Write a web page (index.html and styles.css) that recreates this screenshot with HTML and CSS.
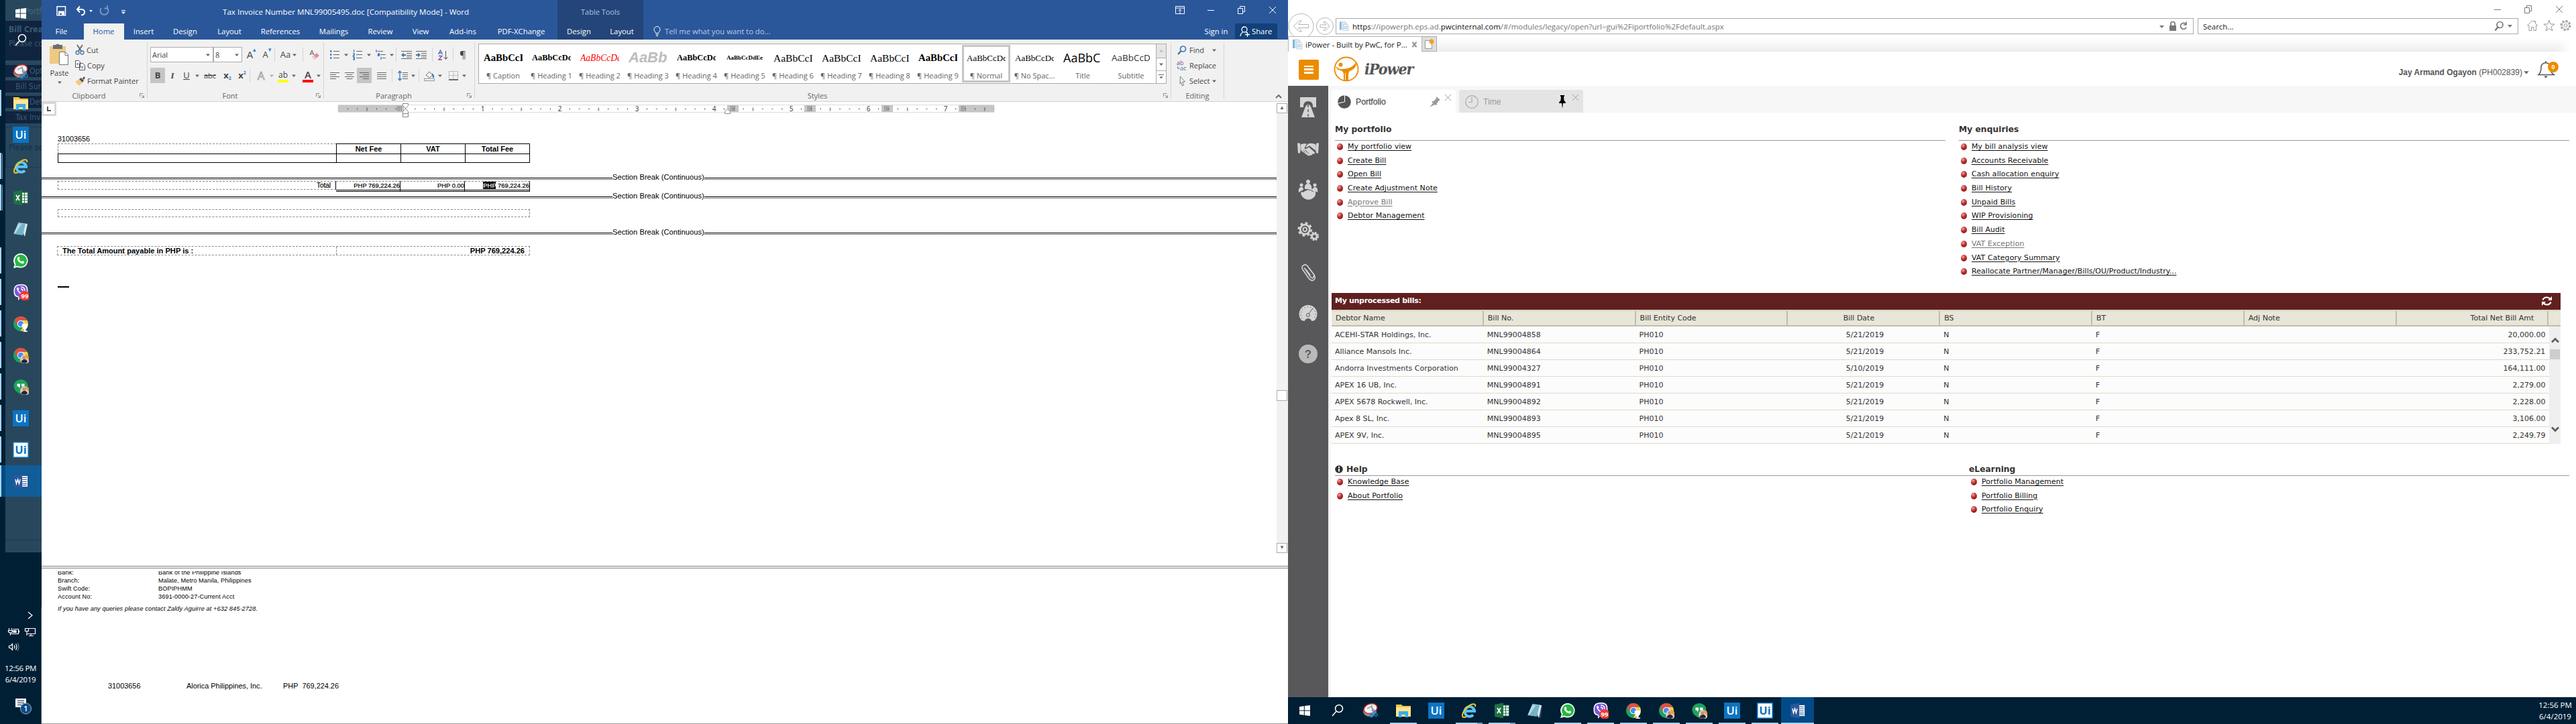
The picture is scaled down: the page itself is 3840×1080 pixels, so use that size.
FILE: index.html
```html
<!DOCTYPE html>
<html lang="en">
<head>
<meta charset="utf-8">
<title>Desktop</title>
<link rel="stylesheet" href="styles.css">
</head>
<body>
<svg class="defs" width="0" height="0" aria-hidden="true">
  <symbol id="i-start" viewBox="0 0 24 24"><path fill="#fff" d="M4 6.200l6.800-1v6.300H4zM11.800 5L20 3.900v7.600h-8.200zM4 12.500h6.800v6.300L4 17.800zM11.800 12.500H20v7.600L11.800 19z"/></symbol>
  <symbol id="i-search" viewBox="0 0 24 24"><g fill="none" stroke="#fff" stroke-width="1.500"><circle cx="14" cy="9" r="5.500"/><path d="M10 13L4 20"/></g></symbol>
  <symbol id="i-snip" viewBox="0 0 24 24"><ellipse cx="11" cy="13" rx="10" ry="8" fill="#8c8f94"/><ellipse cx="12" cy="9" rx="10" ry="7" fill="#f4f4f4" stroke="#d8342b" stroke-width="1.500" transform="rotate(-18 12 9)"/><path d="M7 9l6-3 5 6M14 4l1 9" stroke="#9aa0a6" stroke-width="1.500" fill="none"/><path d="M14 11l5 6M18 11l-4 7" stroke="#3c9be0" stroke-width="1.500"/><circle cx="13.500" cy="19.500" r="2.200" fill="none" stroke="#1779c4" stroke-width="1.500"/><circle cx="20" cy="18" r="2.200" fill="none" stroke="#1779c4" stroke-width="1.500"/></symbol>
  <symbol id="i-folder" viewBox="0 0 24 24"><path fill="#f3c846" d="M1 3h8l2 2h12v16H1z"/><path fill="#ffe596" d="M1 7h22v14H1z"/><path fill="#38ade6" d="M5 22v-9h14v9h-4v-4H9v4z"/></symbol>
  <symbol id="i-ui" viewBox="0 0 24 24"><path fill="#0a74c4" d="M0 0h24v24H0z"/><text x="12" y="18" text-anchor="middle" font-family="Open Sans, sans-serif" font-weight="600" font-size="16.500" fill="#fff">Ui</text></symbol>
  <symbol id="i-uib" viewBox="0 0 24 24"><path fill="#fff" stroke="#0a74c4" stroke-width="1.500" d="M.8.8h22.400v22.400H.8z"/><text x="12" y="18" text-anchor="middle" font-family="Open Sans, sans-serif" font-weight="700" font-size="16.500" fill="#0a74c4">Ui</text></symbol>
  <symbol id="i-ie" viewBox="0 0 24 24"><path fill="none" stroke="#5cc4f2" stroke-width="4" d="M5.500 12.800H20a7.300 7.300 0 1 0-2 5.700"/><path fill="none" stroke="#f3c61f" stroke-width="2" d="M21 6c1-3-1-5-6-3C8 6 2 14 2 19.500c0 3 3 3 6 1.500"/></symbol>
  <symbol id="i-excel" viewBox="0 0 24 24"><path fill="#fff" stroke="#1e7145" d="M12.500 4h10v16h-10z"/><path stroke="#1e7145" d="M13 8h9M13 12h9M13 16h9M17.500 4v16"/><path fill="#1e7145" d="M1 3l13-2.500v23L1 21z"/><path stroke="#fff" stroke-width="1.800" d="M5 8l5 8M10 8l-5 8"/></symbol>
  <symbol id="i-note" viewBox="0 0 24 24"><path fill="#1f4a5e" d="M18 3l5 2-2 18-6-2z"/><path fill="#dfe9ee" d="M8 2l14 2-4 19z"/><path fill="#73b4c8" d="M8 3l11 1-4 17-14-2z"/><path fill="#b7dde8" d="M8 4l5 .5L4 18l-2-.5z"/></symbol>
  <symbol id="i-wa" viewBox="0 0 24 24"><path fill="#fff" d="M12 1a10.800 10.800 0 1 1-5 20.500L1 23l1.800-5.500A10.800 10.800 0 0 1 12 1z"/><path fill="#25b83f" d="M12 2.800a9 9 0 1 1-4.800 16.600L3.500 20.500l1.200-3.600A9 9 0 0 1 12 2.800z"/><path fill="#fff" d="M8 6.500c1-.6 1.600-.2 2 .9.500 1.300.6 1.400 0 2.100-.4.500-.4.800 1 2.300 1.500 1.400 2 1.700 2.500 1.100.9-1.100 1.100-.9 2.600-.2 1.200.6 1.300.9.900 2-.8 1.900-3.200 2-6 .3-3.400-2-5.700-6.600-3-8.500z"/></symbol>
  <symbol id="i-viber" viewBox="0 0 24 24"><path fill="#fff" d="M12 0c8 0 10.500 2.500 10.500 10S20 20 12 20l-4 4v-4.500C3 18.500 1.500 16 1.500 10S4 0 12 0z"/><path fill="#7d57d8" d="M12 1.500c7 0 9 2 9 8.500s-2 8.500-9 8.500L9 22v-3.800C4.500 17.500 3 15 3 10s2-8.500 9-8.500z"/><path fill="none" stroke="#fff" stroke-width="1.500" d="M7 5c-1 3 3 9 8 10l2-2-3-2M7 5l2 3M12 4c4 0 6 2 6 6M12 7c2 0 3 1 3 3"/><circle cx="18" cy="17.500" r="7.500" fill="#f7372d"/><text x="18" y="21" text-anchor="middle" font-family="Open Sans, sans-serif" font-weight="700" font-size="9.500" fill="#fff">99</text></symbol>
  <symbol id="i-chr" viewBox="0 0 24 24"><circle cx="12" cy="12" r="11" fill="#1da261"/><path fill="#dd5144" d="M2.500 6.500A11 11 0 0 1 21.500 6.500L12 7l-5 7z"/><path fill="#ffcd46" d="M21.700 7A11 11 0 0 1 11.500 23l5-9L12 7z"/><circle cx="12" cy="12" r="5.300" fill="#fff"/><circle cx="12" cy="12" r="4.300" fill="#4c8bf5"/></symbol>
  <symbol id="i-face" viewBox="0 0 24 24"><circle cx="18" cy="18" r="7" fill="#d8cfc3"/><path fill="#e89f2e" d="M18 11a7 7 0 0 1 7 8l-4-2z"/><circle cx="17" cy="15.500" r="2.600" fill="#c99273"/><path fill="#25233f" d="M12.500 22c1-3 3-4 5-4s4 1 4.500 4a7 7 0 0 1-9.500 0z"/></symbol>
  <symbol id="i-chrome1" viewBox="0 0 24 24"><use href="#i-chr"/><path fill="#fff" d="M14 12h8c1 4-.5 6.500-2.500 8v2.500H22V24h-6.500v-1.500H17V20c-2.500-1.500-4-4-3-8z"/></symbol>
  <symbol id="i-chrome2" viewBox="0 0 24 24"><use href="#i-chr"/><use href="#i-face"/></symbol>
  <symbol id="i-hang" viewBox="0 0 24 24"><path fill="#1fa05c" d="M12 1a10.500 9.500 0 0 1 0 19v3C5 20 1.500 16 1.500 10.500A10.500 9.500 0 0 1 12 1z"/><path fill="#fff" d="M6.500 7.500h4.500v4l-2 3v-3H6.500zM13 7.500h4.500v4l-2 3v-3H13z"/><use href="#i-face"/></symbol>
  <symbol id="i-word" viewBox="0 0 24 24"><path fill="#fff" stroke="#2b579a" d="M12.500 3.500h10v17h-10z"/><path stroke="#2b579a" d="M13 6.500h8M13 9.500h8M13 12.500h8M13 15.500h8M13 18h8"/><path fill="#2b579a" d="M1 3l13-2.500v23L1 21z"/><path fill="none" stroke="#fff" stroke-width="1.500" d="M4 9l1.500 6.500L7.500 9l2 6.500L11 9"/></symbol>
  <symbol id="i-page" viewBox="0 0 16 16"><path fill="#7db7df" d="M1 1h3v13H1z"/><path fill="#dce9f3" stroke="#b5c6d4" stroke-width=".8" d="M4 1h6l2 2v10H4z"/><path fill="#eef4f9" stroke="#b5c6d4" stroke-width=".8" d="M7 5h6l2 2v8H7z"/><path stroke="#8fb8d6" d="M8.500 9h5M8.500 11.500h5"/></symbol>
  <symbol id="i-caret" viewBox="0 0 8 8"><path fill="currentColor" d="M1 2.500h6L4 6z"/></symbol>
  <symbol id="i-launch" viewBox="0 0 8 8"><path fill="none" stroke="#777" d="M.5 6V.5H6M3 3l4 4M7.300 3.500v3.800H3.500"/></symbol>
  <symbol id="i-lines" viewBox="0 0 14 14"><path stroke="#666" d="M0 2.500h14M0 5.500h14M0 8.500h14M0 11.500h14"/></symbol>
  <symbol id="i-restore" viewBox="0 0 12 12"><path fill="none" stroke="currentColor" d="M.5 3.500h7v8h-7zM3.500 3.500v-3h7v8h-3"/></symbol>
  <symbol id="i-x" viewBox="0 0 12 12"><path fill="none" stroke="currentColor" d="M1 1l10 10M11 1L1 11"/></symbol>
  <symbol id="i-min" viewBox="0 0 12 12"><path stroke="currentColor" d="M1 6.500h10"/></symbol>
</svg>
<div class="desk">

<!-- secondary monitor taskbar, docked left -->
<aside class="dock">
  <div class="ghost" aria-hidden="true"><i class="g1"><b>Portf</b></i><i class="g2"><strong>Bill Crea</strong><span>Please co</span></i><i class="g3">Opt</i><i class="g4">Bill Sur</i><i class="g3">Det</i><i class="g4">Tax Inv</i><i class="g5">Please se</i><i class="g6"></i><i class="g7"></i></div>
  <nav class="dock-list">
    <span class="d0"><svg><use href="#i-start"/></svg></span>
    <span class="d0"><svg><use href="#i-search"/></svg></span>
    <span><svg><use href="#i-snip"/></svg></span>
    <span class="run"><svg><use href="#i-folder"/></svg></span>
    <span><svg><use href="#i-ui"/></svg></span>
    <span class="run two"><svg><use href="#i-ie"/></svg></span>
    <span class="run two"><svg><use href="#i-excel"/></svg></span>
    <span><svg><use href="#i-note"/></svg></span>
    <span class="run"><svg><use href="#i-wa"/></svg></span>
    <span class="run"><svg><use href="#i-viber"/></svg></span>
    <span class="run"><svg><use href="#i-chrome1"/></svg></span>
    <span class="run"><svg><use href="#i-chrome2"/></svg></span>
    <span class="run"><svg><use href="#i-hang"/></svg></span>
    <span class="run"><svg><use href="#i-ui"/></svg></span>
    <span class="run"><svg><use href="#i-uib"/></svg></span>
    <span class="run on"><svg><use href="#i-word"/></svg></span>
  </nav>
  <div class="tray">
    <svg class="tray-icons" width="62" height="72" viewBox="0 0 62 72" fill="none" stroke="#fff" stroke-width="1.200"><path d="M42 7l6 5-6 5"/><path d="M19.500 32.500h8v7h-11M28.500 34.500v3M13.500 31v3M17.500 31v3M12.500 34.500h6v2q-3 3-6 0zM15.500 37.500v4"/><path fill="#fff" d="M20 34.500h4v3h-4z"/><path d="M42 31.500h10.500v8H41M46 39.500v3M43 42.500h7M37.500 31.500h5v4h-5zM40 36v6"/><path d="M13.500 57.500h2l3-3v9l-3-3h-2zM21 56.500q2 2.500 0 5M23.500 54.500q3 4.500 0 9"/><path stroke="#71808c" d="M26 53q4 6 0 12"/></svg>
    <div class="tray-time">12:56 PM<br>6/4/2019</div>
    <svg class="tray-note" width="28" height="26" viewBox="0 0 28 26"><path fill="#fff" d="M2 2h16v13h-4v4l-4-4H2z"/><path stroke="#001f35" d="M5 5.500h10M5 8.500h10M5 11.500h8"/><ellipse cx="17.500" cy="17" rx="8" ry="8" fill="#0b4b84" stroke="#9db6ca"/><text x="17.500" y="21" text-anchor="middle" font-family="Open Sans, sans-serif" font-weight="600" font-size="11" fill="#fff">1</text></svg>
  </div>
</aside>

<!-- Word -->
<section class="word">
  <header class="w-title">
    <svg class="qat" width="130" height="20" viewBox="0 0 130 20" fill="none" stroke="#fff"><path stroke-width="1.500" d="M1 1.700h12.500v13H1z"/><path fill="#fff" d="M3 8.500h9V15H3z" stroke="none"/><path stroke="#2a579a" stroke-width="2" d="M5 13h3"/><path stroke-width="2" d="M35 1.500l-4 4.500 4 4.500M31.500 6H38q5 1 4 5-1 3.500-5 3.500"/><path fill="#fff" stroke="none" d="M49 7h5l-2.500 3z"/><g stroke="#7f9cc8" stroke-width="1.800"><path d="M75.500 3.500A6 6 0 1 1 67 4M76 0v4.500h-4.500"/></g><path d="M97 7.500h6"/><path fill="#fff" stroke="none" d="M97 9.500h6l-3 3.500z"/></svg>
    <div class="w-name">Tax Invoice Number MNL99005495.doc [Compatibility Mode] - Word</div>
    <div class="w-ctx">Table Tools</div>
    <div class="w-win"><svg viewBox="0 0 14 12"><path fill="none" stroke="#fff" d="M.5.500h13v11H.5zM1 3h12M7 11V5M4.500 7L7 4.800 9.500 7"/></svg><svg><use href="#i-min"/></svg><svg><use href="#i-restore"/></svg><svg><use href="#i-x"/></svg></div>
  </header>
  <nav class="w-tabs">
    <span>File</span><span class="sel">Home</span><span>Insert</span><span>Design</span><span>Layout</span><span>References</span><span>Mailings</span><span>Review</span><span>View</span><span>Add-ins</span><span>PDF-XChange</span><span class="ctx">Design</span><span class="ctx">Layout</span>
    <span class="tell"><svg width="11" height="16" viewBox="0 0 11 16" fill="none" stroke="#fff"><path d="M3.500 10.500C3 8.500 1 7.500 1 5a4.500 4.500 0 0 1 9 0c0 2.500-2 3.500-2.500 5.500zM3.500 12.500h4M4 14.500h3"/></svg>Tell me what you want to do...</span>
    <span class="signin">Sign in</span>
    <span class="share"><svg width="15" height="16" viewBox="0 0 15 16" fill="none" stroke="#fff" stroke-width="1.300"><circle cx="7" cy="5" r="4"/><path d="M5 9q-4 2-4 6M9 9q1 0 1.500 1M8 12.500h7M11.500 9v7"/></svg>Share</span>
  </nav>
  <div class="ribbon">
    <div class="grp g-clip">
      <div class="g-body">
        <div class="paste"><svg width="30" height="32" viewBox="0 0 30 32"><path fill="#eec983" d="M0 3h24v26H0z"/><path fill="#6d6d6d" d="M5 1h4q3-3 6 0h4v6H5z"/><path fill="#fff" stroke="#777" d="M14.500 11.500h9l4 4v15h-13z"/><path fill="none" stroke="#777" d="M23 11.500v5h5"/></svg>Paste<svg class="cr"><use href="#i-caret"/></svg></div>
        <div class="clip">
          <span><svg width="14" height="15" viewBox="0 0 14 15" fill="none"><path stroke="#666" stroke-width="1.800" d="M3 0l6 9M11 0L5 9"/><circle cx="3.500" cy="11.500" r="2.500" stroke="#3a78b8" stroke-width="1.300"/><circle cx="10.500" cy="11.500" r="2.500" stroke="#3a78b8" stroke-width="1.300"/></svg>Cut</span>
          <span><svg width="15" height="15" viewBox="0 0 15 15" fill="#fff" stroke="#555"><path d="M.5.500h5l2 2v8h-7zM6.500 4.500h5l3 3v7h-8z"/><path stroke="#3a78b8" d="M2 4.500h3M2 6.500h3M8.500 9.500h4M8.500 11.500h4"/></svg>Copy</span>
          <span><svg width="15" height="14" viewBox="0 0 15 14"><path fill="#eec983" d="M0 8l6-4 5 5-5 5z"/><path fill="#555" d="M6 4l3-2 4 4-2 3zM11 3l2-3 2 2-2 3z"/></svg>Format Painter</span>
        </div>
      </div>
      <div class="g-lab">Clipboard<svg><use href="#i-launch"/></svg></div>
    </div>
    <div class="grp g-font">
      <div class="row r-f1">
        <span class="combo">Arial<svg class="cr"><use href="#i-caret"/></svg></span><span class="combo sz">8<svg class="cr"><use href="#i-caret"/></svg></span>
        <span class="big">A<em>▴</em></span><span class="mid">A<em>▾</em></span><i></i><span>Aa<svg class="cr"><use href="#i-caret"/></svg></span><i></i>
        <span><svg width="15" height="16" viewBox="0 0 15 16"><path d="M1 8l3-7 3 7M2 6h4" stroke="#555" fill="none"/><path fill="#e58b9b" d="M4 11l7-6 4 4-7 6z"/><path fill="#f6cdd4" d="M4 11l3-2 4 4-3 2z"/></svg></span>
      </div>
      <div class="row r-f2">
        <span class="on"><b>B</b></span><span class="ser"><b>I</b></span><span><u>U</u></span><span><svg class="cr"><use href="#i-caret"/></svg></span><span><s>abc</s></span><span class="bd">x<sub>2</sub></span><span class="bd">x<sup>2</sup></span><i></i>
        <span class="fx">A</span><span class="dim"><svg class="cr"><use href="#i-caret"/></svg></span><span class="bar yel">ab</span><span><svg class="cr"><use href="#i-caret"/></svg></span><span class="bar red">A</span><span><svg class="cr"><use href="#i-caret"/></svg></span>
      </div>
      <div class="g-lab">Font<svg><use href="#i-launch"/></svg></div>
    </div>
    <div class="grp g-para">
      <div class="row r-p1">
        <span><svg width="14" height="15" viewBox="0 0 14 15"><path stroke="#666" d="M5 2.500h9M5 7.500h9M5 12.500h9"/><path stroke="#3a78b8" stroke-width="2.500" d="M0 2.500h2.500M0 7.500h2.500M0 12.500h2.500"/></svg></span><span><svg class="cr"><use href="#i-caret"/></svg></span>
        <span><svg width="14" height="16" viewBox="0 0 14 16"><path stroke="#666" d="M5 2.500h9M5 7.500h9M5 12.500h9"/><path stroke="#3a78b8" stroke-width="1.300" fill="none" d="M1.500 0v4M.3 6h2v1.500l-2 2h2.200M.3 11.500h2v3.500h-2M1 13h1"/></svg></span><span><svg class="cr"><use href="#i-caret"/></svg></span>
        <span><svg width="15" height="16" viewBox="0 0 15 16"><path stroke="#666" d="M3 2.500h8M7 7.500h8M10 12.500h5"/><path stroke="#3a78b8" stroke-width="1.300" fill="none" d="M1 0v4M3.500 6h2v3h-2v-1.500h2M8 11v4"/></svg></span><span><svg class="cr"><use href="#i-caret"/></svg></span><i></i>
        <span><svg width="16" height="14" viewBox="0 0 16 14"><path stroke="#666" d="M0 1.500h16M8 4.500h8M8 7.500h8M0 12.500h16M8 10h8"/><path fill="#3a78b8" d="M0 7l4-3.500V6h3v2H4v2.500z"/></svg></span>
        <span><svg width="16" height="14" viewBox="0 0 16 14"><path stroke="#666" d="M0 1.500h16M8 4.500h8M8 7.500h8M0 12.500h16M8 10h8"/><path fill="#3a78b8" d="M7 7L3 3.500V6H0v2h3v2.500z"/></svg></span><i></i>
        <span><svg width="15" height="16" viewBox="0 0 15 16" fill="none"><path stroke="#3a78b8" stroke-width="1.300" d="M.5 7l3-6 3 6M1.500 5h4"/><path stroke="#8d4ba6" stroke-width="1.300" d="M1 9.500h5L1 15h5"/><path stroke="#555" d="M11.500 2v12M8.500 11l3 3.500 3-3.500"/></svg></span><i></i><span class="pil">¶</span>
      </div>
      <div class="row r-p2">
        <span><svg width="14" height="14" viewBox="0 0 14 14"><path stroke="#666" d="M0 2.500h14M0 5.500h9M0 8.500h14M0 11.500h9"/></svg></span><span><svg width="14" height="14" viewBox="0 0 14 14"><path stroke="#666" d="M0 2.500h14M2.500 5.500h9M0 8.500h14M2.500 11.500h9"/></svg></span><span class="on"><svg width="14" height="14" viewBox="0 0 14 14"><path stroke="#666" d="M0 2.500h14M5 5.500h9M0 8.500h14M5 11.500h9"/></svg></span><span><svg width="14" height="14"><use href="#i-lines"/></svg></span><i></i>
        <span><svg width="15" height="16" viewBox="0 0 15 16" fill="none"><path stroke="#666" d="M7 3.500h8M7 6.500h8M7 9.500h8M7 12.500h8"/><path stroke="#3a78b8" stroke-width="1.300" d="M3 1v14M.5 4L3 1l2.500 3M.5 12L3 15l2.500-3"/></svg></span><span><svg class="cr"><use href="#i-caret"/></svg></span><i></i>
        <span><svg width="16" height="16" viewBox="0 0 16 16"><path fill="#fff" stroke="#666" d="M3 7l5-5 5 5-5 4z"/><path fill="#3a78b8" d="M12 4q4 3 3 7h-2z"/><path fill="#fff" stroke="#888" d="M.5 12.500h15v3H.5z"/></svg></span><span><svg class="cr"><use href="#i-caret"/></svg></span>
        <span><svg width="14" height="14" viewBox="0 0 14 14"><path fill="none" stroke="#888" stroke-dasharray="1 1.200" d="M.5.500h13v12H.5zM7 0v12M0 6.500h14"/><path stroke="#444" stroke-width="1.500" d="M0 13h14"/></svg></span><span><svg class="cr"><use href="#i-caret"/></svg></span>
      </div>
      <div class="g-lab">Paragraph<svg><use href="#i-launch"/></svg></div>
    </div>
    <div class="grp g-style">
      <div class="gal">
        <div><b class="s16">AaBbCcI</b><span>¶ Caption</span></div>
        <div><b class="s13">AaBbCcDd</b><span>¶ Heading 1</span></div>
        <div><b class="s13 redi">AaBbCcDd</b><span>¶ Heading 2</span></div>
        <div><b class="s20">AaBb</b><span>¶ Heading 3</span></div>
        <div><b class="s13">AaBbCcDd</b><span>¶ Heading 4</span></div>
        <div><b class="s9">AaBbCcDdEe</b><span>¶ Heading 5</span></div>
        <div><b class="s16 rg">AaBbCcI</b><span>¶ Heading 6</span></div>
        <div><b class="s16 rg">AaBbCcI</b><span>¶ Heading 7</span></div>
        <div><b class="s16 rg">AaBbCcI</b><span>¶ Heading 8</span></div>
        <div><b class="s16">AaBbCcI</b><span>¶ Heading 9</span></div>
        <div class="cur"><b class="s13 rg">AaBbCcDd</b><span>¶ Normal</span></div>
        <div><b class="s13 rg">AaBbCcDd</b><span>¶ No Spac...</span></div>
        <div><b class="st">AaBbC</b><span>Title</span></div>
        <div><b class="ss">AaBbCcD</b><span>Subtitle</span></div>
        <p><i class="up"><svg class="cr"><use href="#i-caret"/></svg></i><i><svg class="cr"><use href="#i-caret"/></svg></i><i class="more"><svg class="cr"><use href="#i-caret"/></svg></i></p>
      </div>
      <div class="g-lab">Styles<svg><use href="#i-launch"/></svg></div>
    </div>
    <div class="grp g-edit">
      <div class="clip">
        <span><svg width="14" height="14" viewBox="0 0 14 14" fill="none" stroke="#3a78b8"><circle cx="8.500" cy="5" r="4" stroke-width="1.700"/><path stroke-width="2.500" d="M5.500 8L1 13"/></svg>Find<svg class="cr far"><use href="#i-caret"/></svg></span>
        <span><svg width="16" height="16" viewBox="0 0 16 16"><text y="7" font-family="Open Sans" font-size="9" fill="#555">a<tspan fill="#8d4ba6">b</tspan></text><text x="5" y="15" font-family="Open Sans" font-size="9" fill="#3a78b8">ac</text><path fill="none" stroke="#3a78b8" d="M1.500 9v3H5"/></svg>Replace</span>
        <span><svg width="14" height="16" viewBox="0 0 14 16"><path fill="#fff" stroke="#777" d="M4.500 1l7 8h-4l2 5-2 1-2-5-1.500 2z"/></svg>Select<svg class="cr"><use href="#i-caret"/></svg></span>
      </div>
      <div class="g-lab">Editing</div>
    </div>
    <svg class="fold" width="10" height="7" viewBox="0 0 10 7"><path fill="none" stroke="#666" stroke-width="1.800" d="M1 6l4-4 4 4"/></svg>
  </div>
  <div class="ruler-row">
    <span class="tabsel"><svg width="16" height="15" viewBox="0 0 16 15"><path fill="none" stroke="#555" stroke-width="2" d="M6 4v6h5"/></svg></span>
    <svg class="ruler" width="979" height="24" viewBox="504 152 979 24">
      <defs>
        <pattern id="ticks" width="115.100" height="12" patternUnits="userSpaceOnUse" x="604.600" y="157"><path stroke="#444" d="M14.400 4.500v2M28.800 4.500v2M43.200 4.500v2M57.500 3.500v5M71.900 4.500v2M86.300 4.500v2M100.700 4.500v2"/></pattern>
        <pattern id="hash" width="2.600" height="2.600" patternUnits="userSpaceOnUse"><path stroke="#555" stroke-width=".8" fill="none" d="M0 0h3M0 0v3"/></pattern>
      </defs>
      <path fill="#fff" stroke="#dcdcdc" d="M504 156.500h978v11H504z"/>
      <path fill="#c6c6c6" d="M504 157h98v10h-98zM1084 157h17v10h-17zM1199 157h17v10h-17zM1314 157h17v10h-17zM1429 157h53v10h-53z"/>
      <path fill="url(#ticks)" d="M505 157h977v10H505z"/>
      <path fill="url(#hash)" d="M591 158h8v8h-8zM1088 158h8v8h-8zM1203 158h8v8h-8zM1318 158h8v8h-8zM1432 158h8v8h-8z"/>
      <g font-family="Open Sans, sans-serif" font-size="10" fill="#333" text-anchor="middle"><text x="719.500" y="166">1</text><text x="834.500" y="166">2</text><text x="949.500" y="166">3</text><text x="1064.500" y="166">4</text><text x="1179.500" y="166">5</text><text x="1294.500" y="166">6</text><text x="1409.500" y="166">7</text></g>
      <path fill="#fff" stroke="#888" d="M600.500 154.500h8v3l-4 4.500 4 4.500v3h-8v-3l4-4.500-4-4.500zM600.500 169.500h8v5h-8zM1080.500 169.500v-3l4-4 4 4v3z"/>
    </svg>
  </div>
  <div class="pane pane-a">
    <div class="doc">
      <p class="ref">31003656</p>
      <table class="fees"><tr><td class="ghostc"></td><th>Net Fee</th><th>VAT</th><th>Total Fee</th></tr><tr><td></td><td></td><td></td><td></td></tr></table>
      <div class="brk"><span>Section Break (Continuous)</span></div>
      <div class="totals"><span class="tl">Total</span><span>PHP 769,224.26</span><span>PHP 0.00</span><span><mark>PHP</mark> 769,224.26</span></div>
      <div class="brk"><span>Section Break (Continuous)</span></div>
      <div class="blank"></div>
      <div class="brk"><span>Section Break (Continuous)</span></div>
      <div class="payable"><span>The Total Amount payable in PHP is :</span><span>PHP 769,224.26</span></div>
      <hr class="mark">
    </div>
    <div class="vbar"><i>▲</i><i class="thumb"></i><i>▼</i></div>
  </div>
  <div class="split"></div>
  <div class="pane pane-b">
    <dl><dt>Bank:</dt><dd>Bank of the Philippine Islands</dd><dt>Branch:</dt><dd>Malate, Metro Manila, Philippines</dd><dt>Swift Code:</dt><dd>BOPIPHMM</dd><dt>Account No:</dt><dd>3691-0000-27-Current Acct</dd></dl>
    <p class="query">If you have any queries please contact Zaldy Aguirre at +632 845-2728.</p>
    <p class="slip"><span>31003656</span><span>Alorica Philippines, Inc.</span><span>PHP&nbsp; 769,224.26</span></p>
  </div>
</section>

<!-- Browser -->
<section class="ie">
  <div class="ie-win"><svg><use href="#i-min"/></svg><svg><use href="#i-restore"/></svg><svg><use href="#i-x"/></svg></div>
  <div class="ie-nav">
    <svg width="71" height="34" viewBox="0 0 71 34" fill="none" stroke="#b4b4b4"><circle cx="19.500" cy="19" r="18.500"/><path d="M8.500 19l8-8h4l-5 5.500h15v5h-15l5 5.500h-4z"/><circle cx="55" cy="19" r="12.500"/><path d="M62 19l-6-6.500h-3l4 4.500h-9v4h9l-4 4.500h3z"/></svg>
    <div class="addr"><svg width="15" height="16"><use href="#i-page"/></svg><span><b>https</b>://ipowerph.eps.ad.<b>pwcinternal.com</b>/#/modules/legacy/open?url=gui%2Fiportfolio%2Fdefault.aspx</span>
      <svg class="addr-i" width="46" height="16" viewBox="0 0 46 16"><path fill="#777" d="M1 7h7l-3.500 4zM16 7h10v8H16zM29 0"/><path fill="none" stroke="#777" stroke-width="1.700" d="M18 7V4q0-2.500 3-2.500T24 4v3M40.500 5A4.500 4.500 0 1 0 41 10M41 1.500V6h-4"/></svg></div>
    <div class="find"><span>Search...</span><svg width="26" height="16" viewBox="0 0 26 16"><circle cx="7.500" cy="6" r="4.500" fill="none" stroke="#777" stroke-width="1.700"/><path stroke="#777" stroke-width="2.200" d="M4.500 9.500L.5 14.500"/><path fill="#777" d="M19 6h7l-3.500 4z"/></svg></div>
    <svg class="tools" width="66" height="18" viewBox="0 0 66 18" fill="none" stroke="#999"><path d="M.5 9L8 1.500l2.500 2.500V2.500h2v3.500L15.500 9h-2v7.500H10v-5H6.500v5H3V9z"/><path d="M33 1l2 6h6l-5 4 2 6-5-3.500-5 3.500 2-6-5-4h6z"/><circle cx="57.500" cy="9" r="2.500"/><circle cx="57.500" cy="9" r="7" stroke-width="2" stroke-dasharray="3 2.500"/><circle cx="57.500" cy="9" r="5.500"/></svg>
  </div>
  <div class="ie-tabs"><span class="ie-tab"><svg width="16" height="16"><use href="#i-page"/></svg><em>iPower - Built by PwC, for P...</em><svg class="tx" width="9" height="9" viewBox="0 0 12 12"><path stroke="#999" stroke-width="3" d="M2 1l8 10M10 1L2 11"/></svg></span><span class="newtab"><svg width="15" height="16" viewBox="0 0 15 16"><path fill="#fff" stroke="#999" d="M1.500 2.500h10v12h-10z"/><path stroke="#f0a020" stroke-width="1.800" d="M11 0v8M7.500 4h7M8.500 1.500l5 5M13.500 1.500l-5 5"/></svg></span></div>
  <header class="app-head">
    <span class="burger"><i></i><i></i><i></i></span>
    <svg class="logo" width="38" height="38" viewBox="0 0 38 38"><circle cx="19" cy="19" r="17.500" fill="none" stroke="#eb8c00" stroke-width="1.800"/><circle cx="10.500" cy="12.500" r="3" fill="#eb8c00"/><path fill="#eb8c00" d="M3 14q4 6 10 5l8-1q8-2 13-10 1 10-10 14-2 2-2 6v8h-4V25h-1v12h-2V26q-1-4-5-5-6-1-7-7z"/></svg>
    <strong class="brand">iPower</strong>
    <span class="user"><b>Jay Armand Ogayon</b> (PH002839)<svg class="cr"><use href="#i-caret"/></svg></span>
    <span class="bell"><svg width="25" height="26" viewBox="0 0 25 26"><path fill="none" stroke="#555" stroke-width="1.500" d="M1 20.500q4-3 4-11 0-6 7-7 7 1 7 7 0 8 5 11zM12 0v3"/><path fill="#555" d="M9 22.500h6l-3 3z"/></svg><i>0</i></span>
  </header>
  <div class="app">
    <nav class="side">
      <svg viewBox="0 0 32 32"><path d="M4 1h24v15h-5V13q-1-6-7-6t-7 6v3H4z"/><path d="M12 15q4-7 8 0l6 16H6z"/><path stroke="#58585a" stroke-width="1.500" d="M16 12v4M16 19v4M16 26v4"/></svg>
      <svg viewBox="0 0 34 32"><path d="M0 7h4q2 9 0 16H1zM34 7h-4q-2 9 0 16h3z"/><path d="M5 9q5-2 10-1l-4 7q3 3 7-2l10 9q-1 3-4 2-1 3-4 2-2 2-4 0L6 19z"/><path d="M17 8q6-2 12 1v10L19 11q-5 4-6 2z"/><path stroke="#58585a" fill="none" d="M9 18l4 4M12 17l6 7"/></svg>
      <svg viewBox="0 0 32 32"><path d="M5 20a11.500 11.500 0 0 0 22 4V18q-3-4-9-4l-6 4z"/><circle cx="16" cy="4" r="3"/><path d="M11 15q-1-8 5-8t5 8z"/><circle cx="6" cy="9" r="2.500"/><circle cx="26" cy="9" r="2.500"/><path d="M2 20q-1-8 4-8 3 0 3 4zM30 20q1-8-4-8-3 0-3 4z"/><path stroke="#58585a" fill="none" d="M8 20q6-8 16-1"/></svg>
      <svg viewBox="0 0 34 32"><g fill="none" stroke="#d4d4d4"><circle cx="12" cy="13" r="7.500" stroke-width="3"/><circle cx="12" cy="13" r="10" stroke-width="3" stroke-dasharray="4 3.850"/><circle cx="12" cy="13" r="3" stroke-width="2"/><circle cx="27" cy="24" r="4" stroke-width="3"/><circle cx="27" cy="24" r="6" stroke-width="2.500" stroke-dasharray="2.700 2"/></g></svg>
      <svg class="small" viewBox="0 0 32 32"><path fill="none" stroke="#d4d4d4" stroke-width="2" d="M9 8l11 16q4 5 6 1 2-3-1-7L15 5q-3-4-7-2-5 3-2 8l11 16q4 5 8 4 6-3 2-10L17 8M12 11l8 11"/></svg>
      <svg viewBox="0 0 32 32"><path d="M6.500 26A13.500 13.500 0 1 1 25.500 26l-4 1q-2-4-5.500-4t-5.500 4z"/><g fill="none" stroke="#58585a"><path d="M7 23A11 11 0 1 1 25 23" stroke-dasharray="1.500 3"/><circle cx="16" cy="18" r="2.500"/><path d="M17 16l6-8"/></g></svg>
      <svg viewBox="0 0 32 32"><circle cx="16" cy="15" r="14" fill="#b9b9b9"/><text x="16" y="21" text-anchor="middle" font-family="Liberation Sans" font-weight="700" font-size="16" fill="#58585a" stroke="none">?</text></svg>
    </nav>
    <main>
      <div class="strip">
        <span class="t on"><svg width="20" height="20" viewBox="0 0 20 20"><circle cx="10" cy="10" r="9.800" fill="#555"/><path fill="none" stroke="#fff" d="M10.500 0v10L1 12"/></svg><em>Portfolio</em><svg class="pin" width="16" height="16" viewBox="0 0 16 16"><path fill="#999" d="M10 0l6 5-2 1-3 4v3L8 12l-8 4 5-6-2-3h3l4-4z"/></svg><svg class="cls" width="11" height="11"><use href="#i-x"/></svg></span>
        <span class="t"><svg width="20" height="20" viewBox="0 0 20 20" fill="none" stroke="#aaa" stroke-width="1.200"><circle cx="10" cy="10" r="9.300"/><path d="M10 3v7.500H5"/></svg><em>Time</em><svg class="pin" width="12" height="20" viewBox="0 0 12 20"><path d="M3 0h6v2H8l.5 6q2.500 1 2.500 4H7l-1 8-1-8H1q0-3 2.500-4L4 2H3z"/></svg><svg class="cls" width="11" height="11"><use href="#i-x"/></svg></span>
      </div>
      <div class="cols">
        <section><h2>My portfolio</h2><ul><li>My portfolio view</li><li>Create Bill</li><li>Open Bill</li><li>Create Adjustment Note</li><li class="off">Approve Bill</li><li>Debtor Management</li></ul></section>
        <section><h2>My enquiries</h2><ul><li>My bill analysis view</li><li>Accounts Receivable</li><li>Cash allocation enquiry</li><li>Bill History</li><li>Unpaid Bills</li><li>WIP Provisioning</li><li>Bill Audit</li><li class="off">VAT Exception</li><li>VAT Category Summary</li><li>Reallocate Partner/Manager/Bills/OU/Product/Industry...</li></ul></section>
      </div>
      <div class="bills">
        <div class="b-title">My unprocessed bills:<svg width="15" height="14" viewBox="0 0 15 14" fill="none" stroke="#fff" stroke-width="2.200"><path d="M1.500 5.500Q3 1.500 7.500 1.500q3 0 5 2.500M13.500 8.500q-1.500 4-6 4-3 0-5-2.500"/><path fill="#fff" stroke="none" d="M15 0v6H9zM0 14V8h6z"/></svg></div>
        <div class="b-grid b-head"><span>Debtor Name</span><span>Bill No.</span><span>Bill Entity Code</span><span>Bill Date</span><span>BS</span><span>BT</span><span>Adj Note</span><span>Total Net Bill Amt</span></div>
        <div class="b-body">
          <div class="b-rows">
            <div class="b-grid"><span>ACEHI-STAR Holdings, Inc.</span><span>MNL99004858</span><span>PH010</span><span>5/21/2019</span><span>N</span><span>F</span><span></span><span>20,000.00</span></div>
            <div class="b-grid"><span>Alliance Mansols Inc.</span><span>MNL99004864</span><span>PH010</span><span>5/21/2019</span><span>N</span><span>F</span><span></span><span>233,752.21</span></div>
            <div class="b-grid"><span>Andorra Investments Corporation</span><span>MNL99004327</span><span>PH010</span><span>5/10/2019</span><span>N</span><span>F</span><span></span><span>164,111.00</span></div>
            <div class="b-grid"><span>APEX 16 UB, Inc.</span><span>MNL99004891</span><span>PH010</span><span>5/21/2019</span><span>N</span><span>F</span><span></span><span>2,279.00</span></div>
            <div class="b-grid"><span>APEX 5678 Rockwell, Inc.</span><span>MNL99004892</span><span>PH010</span><span>5/21/2019</span><span>N</span><span>F</span><span></span><span>2,228.00</span></div>
            <div class="b-grid"><span>Apex 8 SL, Inc.</span><span>MNL99004893</span><span>PH010</span><span>5/21/2019</span><span>N</span><span>F</span><span></span><span>3,106.00</span></div>
            <div class="b-grid"><span>APEX 9V, Inc.</span><span>MNL99004895</span><span>PH010</span><span>5/21/2019</span><span>N</span><span>F</span><span></span><span>2,249.79</span></div>
          </div>
          <div class="b-bar"><svg width="12" height="9" viewBox="0 0 12 9"><path fill="none" stroke="#606060" stroke-width="2.800" d="M1 7.500l5-5 5 5"/></svg><i></i><svg width="12" height="9" viewBox="0 0 12 9"><path fill="none" stroke="#606060" stroke-width="2.800" d="M1 1.500l5 5 5-5"/></svg></div>
        </div>
      </div>
      <div class="cols foot">
        <section><h2><svg width="12" height="12" viewBox="0 0 12 12"><circle cx="6" cy="6" r="5.800" fill="#333"/><path stroke="#fff" stroke-width="2" d="M6 2v2M6 5v4.500"/></svg>Help</h2><ul><li>Knowledge Base</li><li>About Portfolio</li></ul></section>
        <section><h2>eLearning</h2><ul><li>Portfolio Management</li><li>Portfolio Billing</li><li>Portfolio Enquiry</li></ul></section>
      </div>
    </main>
  </div>
  <footer class="bar2">
    <nav>
      <span><svg><use href="#i-start"/></svg></span><span><svg><use href="#i-search"/></svg></span><span><svg><use href="#i-snip"/></svg></span><span class="run"><svg><use href="#i-folder"/></svg></span><span><svg><use href="#i-ui"/></svg></span><span class="run two"><svg><use href="#i-ie"/></svg></span><span class="run two"><svg><use href="#i-excel"/></svg></span><span><svg><use href="#i-note"/></svg></span><span class="run"><svg><use href="#i-wa"/></svg></span><span class="run"><svg><use href="#i-viber"/></svg></span><span class="run"><svg><use href="#i-chrome1"/></svg></span><span class="run"><svg><use href="#i-chrome2"/></svg></span><span class="run"><svg><use href="#i-hang"/></svg></span><span class="run"><svg><use href="#i-ui"/></svg></span><span class="run"><svg><use href="#i-uib"/></svg></span><span class="run on"><svg><use href="#i-word"/></svg></span>
    </nav>
    <div class="clock">12:56 PM<br>6/4/2019</div>
  </footer>
</section>
</div>
</body>
</html>
```
FILE: styles.css
```css
* { box-sizing: border-box; }
body, p, dl, dd, ul, h2 { margin: 0; padding: 0; }
body { background: #fff; font-family: "Open Sans", sans-serif; font-size: 11px; color: #444; overflow: hidden; }
em, i { font-style: normal; }
svg { display: block; flex: none; overflow: visible; }
.defs { position: absolute; }
.desk { display: flex; width: 3840px; height: 1080px; white-space: nowrap; }
.cr { width: 8px; height: 8px; color: #666; }

/* left dock */
.dock { position: relative; width: 62px; height: 1080px; background: #001f35; display: flex; flex-direction: column; flex: none; overflow: hidden; border-right: 0; }
.ghost { position: absolute; left: 8px; top: 0; width: 54px; height: 824px; background: #28475d; overflow: hidden; font: 12px "DejaVu Sans Condensed", "DejaVu Sans", sans-serif; color: #3d5a72; }
.ghost i { display: block; padding-left: 15px; height: 18px; line-height: 18px; background: #10243f; margin-bottom: 5px; }
.ghost .g1 { background: none; height: 31px; line-height: 34px; margin: 0; padding-left: 29px; color: #46677d; }
.ghost .g1 b { font-weight: 400; }
.ghost .g2 { height: 59px; padding: 3px 0 0 5px; line-height: 21px; margin-bottom: 7px; display: flex; flex-direction: column; }
.ghost .g3 { padding-left: 36px; }
.ghost .g5 { background: none; border: solid #1b3956; border-width: 1px 0 1px 1px; height: 61px; line-height: 60px; padding-left: 4px; margin: 0; color: #122f49; }
.ghost .g6 { background: none; height: 556px; margin: 0; border-bottom: 1px solid #1b3956; }
.ghost .g7 { background: none; margin: 0; }
.dock-list { position: relative; display: flex; flex-direction: column; }
.dock-list span { height: 47px; display: flex; align-items: center; justify-content: center; border-left: 2px solid transparent; padding: 0 2px 0 0; }
.dock-list .d0 { height: 40px; padding-top: 0; }
.dock-list .d0 + .d0 { margin-bottom: 3px; }
.dock-list svg { width: 24px; height: 24px; }
.dock-list .run { border-image: linear-gradient(transparent 9%, #a5d5fb 9%, #a5d5fb 91%, transparent 91%) 0 0 0 1; border-left-width: 2px; }
.dock-list .two { background: linear-gradient(#6f9dbb, #6f9dbb) 1px 5px / 1px 38px no-repeat; }
.dock-list .on { background: linear-gradient(90deg, #004a80 6px, #105d98 6px); border-image: none; border-left-color: #a5d5fb; }
.tray { position: relative; margin-top: auto; height: 174px; color: #fff; border-right: 1px solid #3c5060; }
.tray-time { text-align: center; font-size: 11.500px; line-height: 17px; margin-top: 10px; letter-spacing: -.3px; }
.tray-note { margin: 18px 0 0 21px; }

/* Word chrome */
.word { width: 1858px; flex: none; display: flex; flex-direction: column; background: #fff; }
.w-title { height: 35px; background: #2a579a; color: #fff; display: flex; }
.qat { margin: 8px 0 0 22px; }
.w-name { width: 366px; margin-left: 118px; line-height: 35px; font-size: 11.600px; }
.w-ctx { width: 128px; margin-left: 133px; background: #234579; text-align: center; line-height: 36px; color: #adc3e2; }
.w-win { margin-left: auto; display: flex; gap: 34px; padding: 9px 17px 0 0; color: #fff; }
.w-win svg { width: 12px; height: 12px; }
.w-win svg:first-child { width: 14px; margin-right: -1px; }
.w-tabs { height: 24px; background: #2a579a; color: #fff; display: flex; }
.w-tabs span { line-height: 24px; text-align: center; width: 66px; font-size: 11.300px; }
.w-tabs span:nth-child(1) { width: 63px; padding-right: 4px; }
.w-tabs .sel { background: #f1f1f1; color: #2a579a; width: 60px; padding-right: 1px; }
.w-tabs span:nth-child(3) { width: 58px; }
.w-tabs span:nth-child(6) { width: 86px; }
.w-tabs span:nth-child(7) { width: 73px; }
.w-tabs span:nth-child(9) { width: 54px; }
.w-tabs span:nth-child(10) { width: 72px; }
.w-tabs span:nth-child(11) { width: 105px; padding-right: 3px; }
.w-tabs .ctx { background: #234579; width: 64px; padding-left: 0; }
.w-tabs .tell { width: auto; display: flex; align-items: center; gap: 6px; margin-left: 15px; color: #b8cbe6; }
.w-tabs .signin { width: 46px; margin-left: auto; }
.w-tabs .share { width: 63px; margin: 0 16px 1px 5px; background: #124078; display: flex; align-items: center; gap: 3px; padding-left: 7px; }
.ribbon { height: 93px; background: #f1f1f1; border-bottom: 1px solid #d2d2d2; display: flex; padding-top: 4px; }
.grp { height: 84px; border-right: 1px solid #d4d4d4; display: flex; flex-direction: column; position: relative; }
.g-clip { width: 158px; } .g-font { width: 263px; } .g-para { width: 225px; } .g-style { width: 1038px; } .g-edit { width: 79px; }
.g-lab { margin-top: auto; height: 9px; line-height: 9px; display: flex; justify-content: center; color: #666; align-items: center; padding-right: 16px; position: relative; }
.g-edit .g-lab { padding-right: 0; }
.g-lab svg { width: 7px; height: 7px; position: absolute; right: 4px; top: 1px; }
.g-body { display: flex; }
.paste { width: 50px; display: flex; flex-direction: column; align-items: center; padding: 3px 0 0 3px; line-height: 15px; gap: 3px; }
.clip { display: flex; flex-direction: column; }
.clip span { height: 23px; display: flex; align-items: center; gap: 3px; }
.row { display: flex; align-items: center; height: 23px; margin: 7px 0 0 4px; }
.row + .row { margin-top: 8px; }
.row span { height: 23px; display: flex; align-items: center; justify-content: center; font-size: 13px; line-height: 13px; flex: none; position: relative; }
.row i { width: 1px; height: 21px; background: #d4d4d4; flex: none; }
.row .combo { background: #fff; border: 1px solid #ababab; width: 94px; justify-content: space-between; padding: 0 3px 0 2px; font-size: 11px; }
.row .sz { width: 43px; margin-left: 0; }
.row .big { width: 28px; font-size: 15px; } .row .mid { width: 18px; }
.row em { font-size: 9px; color: #3a78b8; align-self: flex-start; margin-top: -3px; }
.r-f1 .mid + i { margin-left: 2px; }
.r-f1 span:nth-child(6) { width: 41px; gap: 2px; }
.r-f1 span:nth-child(8) { width: 33px; }
.r-f2 span { width: 22px; }
.row .on { background: #c5c5c5; }
.ser { font-family: "Liberation Serif", serif; font-style: italic; }
.r-f2 span:nth-child(3) { width: 20px; margin-left: 0; }
.r-f2 span:nth-child(4) { width: 14px; margin-left: -1px; }
.r-f2 span:nth-child(5) { width: 30px; font-size: 11px; margin-left: -3px; }
.row .bd { font-weight: 700; width: 22px; }
.row sub, .row sup { font-size: 7px; color: #3a78b8; }
.row sub { margin-top: 8px; } .row sup { margin-top: -8px; }
.r-f2 .fx { width: 32px; color: #fff; -webkit-text-stroke: 1px #aaa; font-size: 17px; }
.r-f2 .dim { width: 8px; opacity: .5; margin-left: -4px; }
.r-f2 .dim + .bar { margin-left: 2px; }
.row .bar { width: 22px; height: 16px; margin-left: 3px; font-size: 12px; padding: 0 0 3px; }
.row .bar::after { content: ""; position: absolute; left: 3px; right: 3px; bottom: -2px; height: 4px; background: #ff0; }
.row .red::after { background: #f00; }
.row .red { font-weight: 600; font-size: 15px; margin-left: 5px; }
.r-f2 .bar + span { width: 10px; margin-left: 0; }
.g-para .row { margin-left: 5px; }
.g-para .row span { width: 22px; }
.r-p1 span:nth-child(-n+6):nth-child(even) { width: 12px; }
.r-p1 i { margin: 0; }
.g-para .r-p1 span:nth-child(8), .g-para .r-p1 span:nth-child(9) { width: 22px; }
.r-p1 span:nth-child(8) { margin-left: 4px; }
.r-p1 i:nth-child(10) { margin-left: 5px; }
.r-p1 span:nth-child(11) { margin: 0 4px; }
.r-p1 .pil { margin-left: 3px; font-size: 15px; }
.r-p2 span:nth-child(4) { margin-left: 4px; }
.g-para .r-p2 i { margin-left: 4px; margin-right: 4px; }
.g-para .r-p2 span:nth-child(7), .g-para .r-p2 span:nth-child(10), .g-para .r-p2 span:nth-child(12) { width: 9px; }
.g-para .r-p2 span:nth-child(11) { margin-left: 5px; }
.gal { margin: 2px 0 0 5px; width: 1026px; height: 60px; border: 1px solid #ababab; background: #fff; display: flex; }
.gal div { width: 72px; flex: none; padding: 0 7px; height: 56px; margin-top: 1px; display: flex; flex-direction: column; }
.gal div b { height: 38px; line-height: 39px; overflow: hidden; color: #000; font-family: "Liberation Serif", serif; }
.gal div span { color: #666; text-align: center; margin: 0 -7px; line-height: 16px; font-size: 11px; }
.gal .s16 { font-size: 14.800px; } .gal .s13 { font-size: 12.400px; } .gal .rg { font-weight: 400; }
.gal .s16.rg { font-size: 15.500px; } .gal .s13.rg { font-size: 13px; }
.gal .s13.redi { color: #f00; font-style: italic; font-weight: 400; font-size: 13.600px; }
.gal .s20 { font: italic 700 22px/38px "Liberation Sans", sans-serif; color: #bdbdbd; }
.gal .s9 { font-size: 9px; text-align: center; }
.gal .st { font: 500 18px/38px "Open Sans", sans-serif; } .gal .ss { font: 400 13.500px/38px "Open Sans", sans-serif; color: #333; }
.gal .cur { box-shadow: inset 0 0 0 3px #c5c5c5; }
.gal p { width: 15px; margin-left: auto; border-left: 1px solid #ababab; display: grid; grid-template-rows: 21px 19px 18px; }
.gal p i { display: grid; place-items: center; border-bottom: 1px solid #ababab; }
.gal p .more { border: 0; }
.gal p .up { background: #e6e6e6; color: #bbb; } .gal .up .cr { color: #bbb; transform: rotate(180deg); }
.gal .more .cr { border-top: 1px solid #666; }
.g-edit .clip { padding-left: 8px; } .g-edit .clip svg:first-child { width: 16px; }
.far { margin-left: 8px; }
.fold { margin: 77px 0 0 76px; }
.ruler-row { height: 24px; display: flex; }
.tabsel { width: 22px; height: 21px; padding: 3px; background: #d8d8d8; }
.tabsel svg { background: #fff; }
.ruler { margin-left: 420px; }

/* document */
.pane { font-family: "Liberation Sans", sans-serif; color: #000; }
.pane-a { height: 668px; display: flex; margin-top: 0; }
.doc { width: 1841px; padding-top: 25px; }
.ref { padding-left: 24px; height: 13px; line-height: 13px; font-size: 10.800px; }
.fees { margin: 0 0 0 24px; border-collapse: collapse; width: 704px; table-layout: fixed; font-size: 11px; }
.fees td, .fees th { border: 1px solid #000; padding: 0; height: 13px; line-height: 12px; }
.fees tr:first-child > * { height: 15px; line-height: 14px; }
.fees td:first-child { width: 415px; }
.fees .ghostc { border-top: 1px dashed #888; border-left: 1px dashed #888; }
.brk { height: 4px; margin-top: 21px; display: flex; align-items: center; font-size: 11.200px; }
.brk::before, .brk::after { content: ""; height: 3px; background: linear-gradient(#000, #000) 0 0 / 100% 1px no-repeat, repeating-linear-gradient(90deg, #000 0 1px, #fff 1px 2px) 0 100% / 100% 1px no-repeat; }
.brk::before { width: 851px; } .brk::after { flex: 1; }
.brk span { line-height: 14px; margin-top: -5px; }
.totals { margin: 2px 0 0 24px; width: 704px; height: 15px; display: grid; grid-template-columns: 415px 96px 96px 97px; font-size: 9.400px; line-height: 12px; -webkit-text-stroke: .2px; }
.totals span { text-align: right; border: solid #000; border-width: 1px 1px 3px 0; border-top: 1px dashed #888; border-bottom: 3px double #000; white-space: nowrap; padding-right: 0; }
.totals .tl { border: 1px dashed #888; border-right: 1px solid #000; height: 13px; padding-right: 7px; font-size: 10px; }
.totals mark { background: #000; color: #fff; }
.totals + .brk { margin-top: 7px; }
.blank { margin: 16px 0 0 24px; width: 704px; height: 12px; border: 1px dashed #888; }
.blank + .brk { margin-top: 22px; }
.payable { margin: 17px 0 0 23px; width: 705px; height: 14px; border: 1px dashed #888; display: grid; grid-template-columns: 415px 1fr; font-weight: 700; font-size: 11.100px; line-height: 12px; }
.payable span { padding: 0 7px; }
.payable span + span { text-align: right; border-left: 1px dashed #888; }
.mark { width: 17px; height: 2px; background: #000; border: 0; margin: 46px 0 0 24px; }
.vbar { width: 17px; background: #f1f1f1; display: flex; flex-direction: column; margin-top: -22px; height: 671px; font-size: 8px; color: #666; padding-right: 1px; }
.vbar i { height: 15px; border: 1px solid #ababab; background: #fff; text-align: center; line-height: 12px; }
.vbar .thumb { margin: 413px 0 auto; height: 16px; }
.split { height: 4px; border: solid #888; border-width: 1px 0; background: #eee; }
.pane-b { height: 232px; border-bottom: 1px solid #999; overflow: hidden; padding: 4px 0 0 24px; font-size: 9.200px; letter-spacing: .1px; }
.pane-b dl { display: grid; grid-template-columns: 150px 1fr; grid-auto-rows: 12px; line-height: 12px; height: 44px; overflow: hidden; align-content: end; }
.query { font-style: italic; margin-top: 6px; line-height: 12px; }
.slip { display: flex; font-size: 10.900px; line-height: 14px; margin: 102px 0 0 75px; letter-spacing: 0; }
.slip span:nth-child(1) { width: 117px; } .slip span:nth-child(2) { width: 144px; }

/* browser chrome */
.ie { width: 1920px; flex: none; display: flex; flex-direction: column; background: #fff; }
.ie-win { height: 20px; display: flex; justify-content: flex-end; gap: 34px; padding: 8px 19px 0 0; color: #777; }
.ie-win svg { width: 12px; height: 12px; }
.ie-nav { height: 34px; display: flex; align-items: flex-start; overflow: hidden; font-size: 11.500px; }
.addr, .find { margin-top: 7px; height: 24px; border: 1px solid #ababab; display: flex; align-items: center; color: #777; }
.addr { width: 1279px; padding: 0 5px 0 4px; gap: 5px; }
.addr b { font-weight: 400; color: #111; }
.addr-i { margin-left: auto; }
.find { width: 478px; margin-left: 6px; justify-content: space-between; padding: 0 8px 0 7px; color: #222; }
.tools { margin: 9px 0 0 13px; }
.ie-tabs { height: 23px; display: flex; background: linear-gradient(90deg, transparent 98.500%, #fff 99.600%), linear-gradient(#fff 10%, #ededed); }
.ie-tab { width: 200px; border: 1px solid #b5b5b5; border-bottom: 0; background: #fff; display: flex; align-items: center; padding: 0 6px 0 5px; color: #222; gap: 4px; font-size: 11.400px; }
.tx { margin-left: auto; }
.newtab { width: 22px; background: #ddd; border: 1px solid #ababab; border-left: 0; display: grid; place-items: center; }
.app-head { height: 51px; display: flex; align-items: center; font-family: "Liberation Sans", sans-serif; color: #555; font-size: 12px; }
.burger { width: 30px; height: 30px; margin: 2px 22px 0 16px; background: #eb8c00; border-radius: 2px; padding: 9px 8px; display: flex; flex-direction: column; gap: 2px; }
.burger i { height: 3px; background: #fff; }
.logo { margin-right: 8px; }
.brand { font: italic 700 23px "DejaVu Serif Condensed", "DejaVu Serif", serif; letter-spacing: -1px; }
.user { margin: 11px 0 0 auto; display: flex; align-items: center; white-space: pre; }
.user .cr { width: 10px; height: 10px; margin-left: 1px; }
.bell { position: relative; margin: 2px 32px 0 12px; }
.bell i { position: absolute; right: -6px; top: 1px; width: 16px; height: 16px; border-radius: 8px; background: #eb8c00; color: #fff; text-align: center; font: 700 9px/16px "Liberation Sans", sans-serif; }
.app { height: 912px; display: flex; }
.side { width: 60px; background: #58585a; display: flex; flex-direction: column; align-items: center; padding-top: 16px; gap: 29.500px; fill: #d4d4d4; }
.side svg { width: 32px; height: 32px; }
.side .small { width: 26px; height: 26px; margin: 3px 0; }
main { width: 1860px; font-family: "DejaVu Sans", sans-serif; font-size: 11px; color: #333; box-shadow: inset 5px 0 5px -3px #e8e8e8; }
.strip { height: 40px; background: #f7f7f7; padding: 6px 0 0 5px; display: flex; gap: 5px; }
.t { width: 185px; border-radius: 4px 4px 0 0; background: #e4e4e4; display: flex; align-items: center; padding: 2px 5px 0 9px; font: 12.200px "Liberation Sans", sans-serif; color: #999; }
.t.on { background: #fff; color: #555; -webkit-text-stroke: .3px; }
.t em { margin-left: 7px; }
.t .pin { margin-left: auto; margin-right: 6px; }
.t .cls { margin: -14px 1px 0 0; color: #999; }
.t + .t .pin { margin-right: 8px; }
.cols { display: grid; grid-template-columns: 910px 910px; column-gap: 20px; padding: 16px 0 0 10px; height: 269px; align-items: start; }
h2 { font: 700 12.300px/18px "DejaVu Sans", sans-serif; height: 26px; border-bottom: 1px solid #999; color: #333; display: flex; align-items: center; gap: 5px; padding-bottom: 7px; }
ul { list-style: none; }
li { height: 20.700px; line-height: 17px; padding-left: 19px; position: relative; text-decoration: underline; color: #111; text-underline-offset: 2px; letter-spacing: .05px; }
li::before { content: ""; position: absolute; left: 3px; top: 4px; width: 9px; height: 10px; border-radius: 50%; background: radial-gradient(circle at 35% 30%, #e9a5a5, #b32020 50%, #8a1515); }
li.off { color: #777; }
.bills { margin-left: 5px; width: 1832px; }
.b-title { height: 25px; background: #602020; color: #fff; font-weight: 700; letter-spacing: -.3px; display: flex; align-items: center; justify-content: space-between; padding: 0 13px 2px 5px; }
.b-grid { display: grid; grid-template-columns: repeat(8, 226.800px); height: 25px; line-height: 24px; width: 1815px; border-bottom: 1px solid #e0d9c8; background: #fcfcfc; }
.b-grid span { padding: 1px 5px 0; }
.b-grid span:nth-child(4) { text-align: right; padding-right: 84px; }
.b-grid span:nth-child(8) { text-align: right; }
.b-head { width: 1832px; background: #e8e6d8; border-bottom: 2px solid #c0bda9; border-top: 2px solid #d9d6c6; }
.b-head span { border-right: 2px solid #c0bda9; padding: 0 6px; line-height: 21px; }
.b-head span:nth-child(4) { padding-right: 96px; }
.b-head span:nth-child(8) { padding-right: 20px; }
.b-body { display: flex; }
.b-bar { width: 17px; background: #efefef; display: flex; flex-direction: column; align-items: center; padding: 16px 0 17px; }
.b-bar i { width: 15px; height: 15px; background: #cdcdcd; margin: 9px 0 auto; }
.foot { padding-top: 28px; column-gap: 0; grid-template-columns: 930px 910px; height: auto; }
.foot h2 { height: 20px; padding-bottom: 0; }
.foot section + section h2 { padding-left: 15px; }
.foot section + section ul { padding-left: 15px; }
.bar2 { height: 40px; background: #001f35; display: flex; justify-content: space-between; color: #fff; }
.bar2 nav { display: flex; }
.bar2 nav span { width: 49px; height: 40px; display: grid; place-items: center; }
.bar2 nav svg { width: 24px; height: 24px; }
.bar2 .run { background: linear-gradient(#a5d5fb, #a5d5fb) 50% 100% / 40px 2px no-repeat; }
.bar2 .two { background: linear-gradient(90deg, #a5d5fb 32px, #6f9dbb 32px) 50% 100% / 40px 2px no-repeat; }
.bar2 .on { background: linear-gradient(#a5d5fb, #a5d5fb) 50% 100% / 100% 2px no-repeat, #004a87; }
.clock { width: 62px; text-align: center; font-size: 11.500px; line-height: 17px; padding-top: 3px; }
```
